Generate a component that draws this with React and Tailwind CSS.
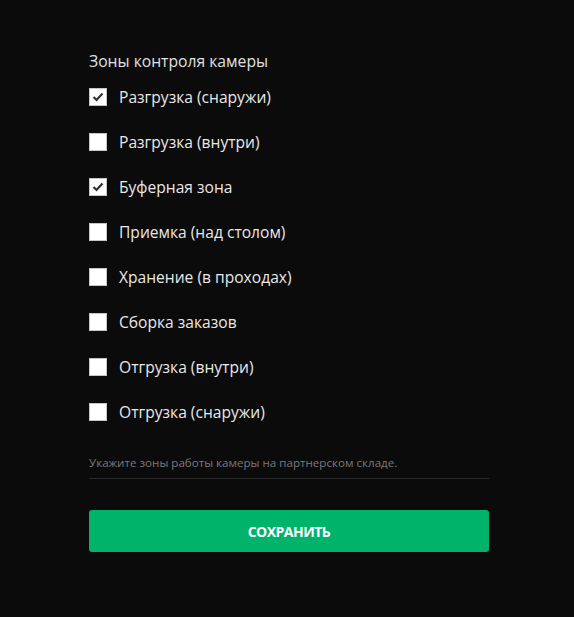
import { useState } from "react";

const ZONES = [
  { id: "unload-out", label: "Разгрузка (снаружи)", checked: true },
  { id: "unload-in", label: "Разгрузка (внутри)", checked: false },
  { id: "buffer", label: "Буферная зона", checked: true },
  { id: "receive", label: "Приемка (над столом)", checked: false },
  { id: "storage", label: "Хранение (в проходах)", checked: false },
  { id: "picking", label: "Сборка заказов", checked: false },
  { id: "ship-in", label: "Отгрузка (внутри)", checked: false },
  { id: "ship-out", label: "Отгрузка (снаружи)", checked: false },
];

function Checkbox({ checked, onChange }) {
  return (
    <button
      type="button"
      onClick={onChange}
      className="w-[18px] h-[18px] shrink-0 bg-white border border-[#c4c4c4] flex items-center justify-center"
    >
      {checked && (
        <svg width="12" height="10" viewBox="0 0 12 10" fill="none">
          <path d="M1.5 5 L4.5 8 L10.5 1.5" stroke="#333" strokeWidth="2.2" />
        </svg>
      )}
    </button>
  );
}

export default function App() {
  const [zones, setZones] = useState(ZONES);

  const toggle = (id) =>
    setZones((prev) => prev.map((z) => (z.id === id ? { ...z, checked: !z.checked } : z)));

  return (
    <div
      className="min-h-[617px] bg-[#0b0b0b] text-[#e6e6e6] pt-[51px]"
      style={{ fontFamily: '"Open Sans", sans-serif' }}
    >
      <div className="ml-[89px] w-[400px]">
        <p className="text-[15.7px] leading-[20px] text-[#e0e0e0]">Зоны контроля камеры</p>

        <div className="mt-[17px] flex flex-col gap-[27px]">
          {zones.map((z) => (
            <label key={z.id} className="flex items-center gap-[12px] h-[18px] cursor-pointer">
              <Checkbox checked={z.checked} onChange={() => toggle(z.id)} />
              <span className="text-[15.6px] leading-[20px] text-[#e8e8e8]">{z.label}</span>
            </label>
          ))}
        </div>

        {/* hint */}
        <p className="mt-[34px] text-[11.6px] leading-[16px] text-[#7a7a7a]">
          Укажите зоны работы камеры на партнерском складе.
        </p>
        <div className="mt-[7px] h-px bg-[#2a2a2a]" />

        <button className="mt-[31px] w-full h-[42px] rounded-[3px] bg-[#00b36b] text-white text-[14px] font-bold tracking-[-0.5px]">
          СОХРАНИТЬ
        </button>
      </div>
    </div>
  );
}
